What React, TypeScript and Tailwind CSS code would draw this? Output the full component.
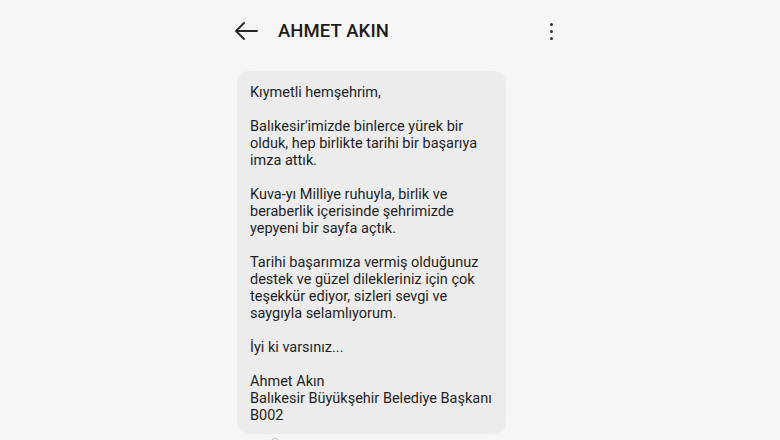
import React from "react";

const BackArrow = () => (
  <svg width="24" height="24" viewBox="0 0 24 24" fill="none" stroke="#262626" strokeWidth="1.9" strokeLinecap="round" strokeLinejoin="round">
    <path d="M23 12H2M10 4l-8 8 8 8" />
  </svg>
);

const paragraphs: string[][] = [
  ["Kıymetli hemşehrim,"],
  ["Balıkesir'imizde binlerce yürek bir", "olduk, hep birlikte tarihi bir başarıya", "imza attık."],
  ["Kuva-yı Milliye ruhuyla, birlik ve", "beraberlik içerisinde şehrimizde", "yepyeni bir sayfa açtık."],
  ["Tarihi başarımıza vermiş olduğunuz", "destek ve güzel dilekleriniz için çok", "teşekkür ediyor, sizleri sevgi ve", "saygıyla selamlıyorum."],
  ["İyi ki varsınız..."],
  ["Ahmet Akın", "Balıkesir Büyükşehir Belediye Başkanı", "B002"],
];

export default function App() {
  return (
    <div className="h-[440px] w-[780px] overflow-hidden bg-[#f6f6f6] font-['Roboto',sans-serif] text-[#1f1f1f]">
      {/* header */}
      <div className="flex h-[62px] items-center pl-[234px] pr-[227px]">
        <BackArrow />
        <h1 className="ml-[20px] mt-[1px] text-[18.5px] font-medium tracking-[0.1px] text-[#1c1c1c]">AHMET AKIN</h1>
        <div className="ml-auto flex flex-col items-center gap-[4px]">
          <span className="h-[3px] w-[3px] rounded-full bg-[#333]" />
          <span className="h-[3px] w-[3px] rounded-full bg-[#333]" />
          <span className="h-[3px] w-[3px] rounded-full bg-[#333]" />
        </div>
      </div>

      {/* message bubble */}
      <div className="ml-[237px] mt-[9px] w-[269px] rounded-[12px] bg-[#ececec] px-[13px] pb-[10px] pt-[13px] text-[14.5px] leading-[17px]">
        {paragraphs.map((p, i) => (
          <div key={i} className={i > 0 ? "mt-[17px]" : ""}>
            {p.map((line) => (
              <div key={line} className="whitespace-nowrap">{line}</div>
            ))}
          </div>
        ))}
      </div>
      <div className="ml-[270px] mt-[4px] h-[10px] w-[10px] rounded-full border-[1.5px] border-[#bbb]" />
    </div>
  );
}
